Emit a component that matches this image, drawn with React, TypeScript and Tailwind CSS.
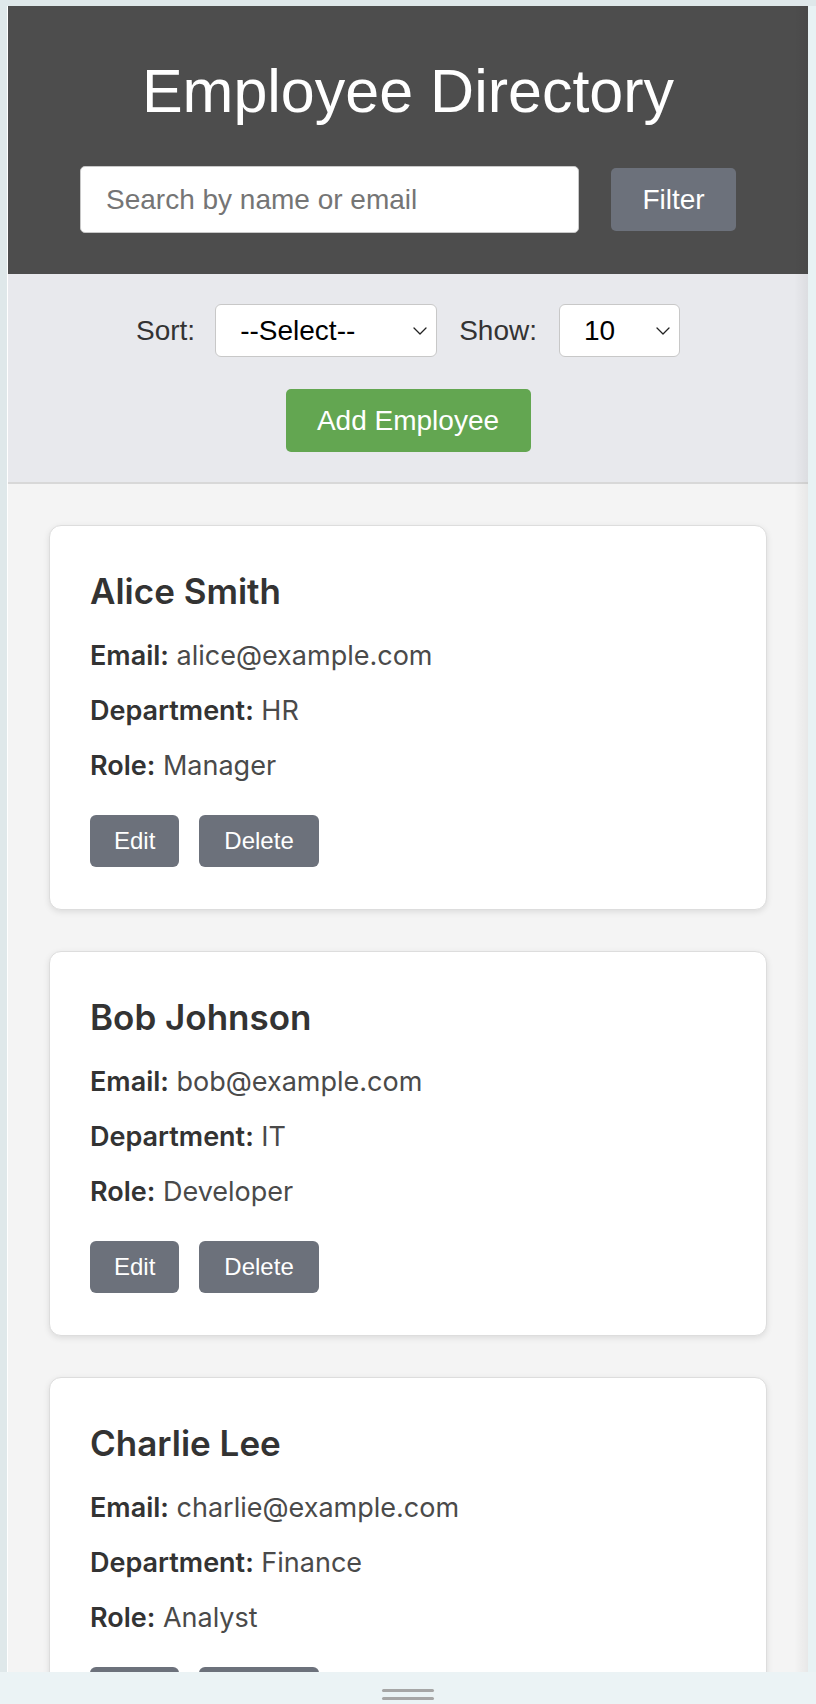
import { ChevronDown } from "lucide-react";

interface Employee {
  name: string;
  email: string;
  department: string;
  role: string;
}

const employees: Employee[] = [
  { name: "Alice Smith", email: "alice@example.com", department: "HR", role: "Manager" },
  { name: "Bob Johnson", email: "bob@example.com", department: "IT", role: "Developer" },
  { name: "Charlie Lee", email: "charlie@example.com", department: "Finance", role: "Analyst" },
];

export default function App() {
  return (
    <div className="flex h-[1704px] flex-col overflow-hidden bg-[#dfe8ea]">
      <div className="flex min-h-0 flex-1 pt-[6px]">
        <div className="w-[7px] shrink-0" />

        {/* Page frame */}
        <div className="relative flex w-[801px] shrink-0 flex-col overflow-hidden border-l border-white bg-[#f4f4f4] font-['Liberation_Sans',Arial,sans-serif]">
          {/* Header */}
          <header className="bg-[#4d4d4d] px-6 pb-[41px] pt-[50px] text-center">
            <h1 className="mb-[40px] text-[61px] font-normal leading-[70px] text-white">
              Employee Directory
            </h1>
            <div className="flex items-center justify-center gap-[32px]">
              <input
                type="text"
                placeholder="Search by name or email"
                className="h-[67px] w-[499px] rounded-[5px] border border-[#c8c8c8] bg-white px-[25px] text-[28px] text-[#333] outline-none placeholder:text-[#757575]"
              />
              <button className="h-[63px] w-[125px] rounded-[5px] bg-[#6c717b] text-[28px] text-white">
                Filter
              </button>
            </div>
          </header>

          {/* Controls */}
          <section className="flex flex-col items-center gap-[32px] border-b-2 border-[#d8d8d8] bg-[#e8e9ed] pb-[30px] pt-[30px]">
            <div className="flex items-center text-[28px] text-[#333]">
              <label className="mr-[20px]">Sort:</label>
              <SelectBox width="w-[222px]" value="--Select--" />
              <label className="ml-[22px] mr-[22px]">Show:</label>
              <SelectBox width="w-[121px]" value="10" />
            </div>
            <button className="h-[63px] w-[245px] rounded-[5px] bg-[#63a651] text-[28px] text-white">
              Add Employee
            </button>
          </section>

          {/* Employee list */}
          <main className="flex flex-col gap-[41px] px-[41px] pt-[41px]">
            {employees.map((emp) => (
              <EmployeeCard key={emp.name} emp={emp} />
            ))}
          </main>

          {/* right edge shading */}
          <div className="pointer-events-none absolute right-0 top-0 h-full w-[14px] bg-gradient-to-r from-transparent to-[rgba(0,0,0,0.05)]" />
        </div>

        <div className="flex-1 bg-[#e8f2f4]" />
      </div>

      {/* Resize handle bar */}
      <div className="flex h-[32px] shrink-0 flex-col items-center gap-[5px] bg-[#ebf3f5] pt-[17px]">
        <div className="h-[3px] w-[52px] rounded-full bg-[#a6a6a6]" />
        <div className="h-[3px] w-[52px] rounded-full bg-[#a6a6a6]" />
      </div>
    </div>
  );
}

function SelectBox({ width, value }: { width: string; value: string }) {
  return (
    <div
      className={`${width} relative flex h-[53px] items-center rounded-[6px] border border-[#c8c8c8] bg-white pl-[24px] text-[28px] text-black`}
    >
      {value}
      <ChevronDown
        className="absolute right-[4px] top-1/2 -translate-y-1/2 text-[#222]"
        size={24}
        strokeWidth={1.3}
      />
    </div>
  );
}

function EmployeeCard({ emp }: { emp: Employee }) {
  return (
    <div className="shrink-0 rounded-[12px] border border-[#dddddd] bg-white px-[40px] pb-[42px] pt-[44px] font-['Inter',sans-serif] shadow-[0_2px_6px_rgba(0,0,0,0.1)]">
      <h2 className="mb-[28px] text-[35px] font-semibold leading-[42px] text-[#333]">
        {emp.name}
      </h2>
      <div className="flex flex-col gap-[23px] text-[27px] leading-[32px] text-[#4a4a4a]">
        <p>
          <strong className="font-semibold text-[#333]">Email:</strong> {emp.email}
        </p>
        <p>
          <strong className="font-semibold text-[#333]">Department:</strong> {emp.department}
        </p>
        <p>
          <strong className="font-semibold text-[#333]">Role:</strong> {emp.role}
        </p>
      </div>
      <div className="mt-[33px] flex gap-[20px] font-['Liberation_Sans',Arial,sans-serif]">
        <button className="h-[52px] rounded-[6px] bg-[#6c717b] px-[24px] text-[24px] text-white">
          Edit
        </button>
        <button className="h-[52px] rounded-[6px] bg-[#6c717b] px-[25px] text-[24px] text-white">
          Delete
        </button>
      </div>
    </div>
  );
}
